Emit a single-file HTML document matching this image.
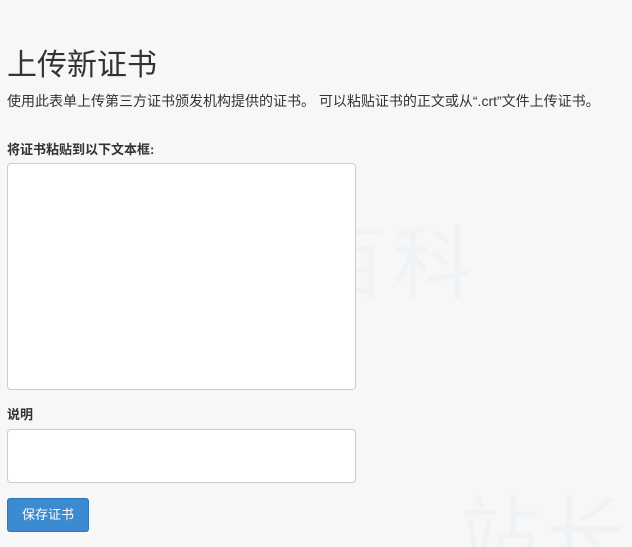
<!DOCTYPE html>
<html><head><meta charset="utf-8"><style>
html,body{margin:0;padding:0;width:632px;height:547px;background:#f7f7f7;overflow:hidden;font-family:"Liberation Sans","Noto Sans CJK SC",sans-serif;color:#333;position:relative}
h1{position:absolute;left:7px;top:46px;margin:0;font-weight:normal;font-size:30px;line-height:40px;color:#333}
.p{position:absolute;left:7px;top:91px;font-size:14px;line-height:20px;white-space:nowrap}
.l{position:absolute;left:7px;font-size:13px;font-weight:bold;line-height:18px}
.ta{position:absolute;left:7px;width:349px;background:#fff;border:1px solid #ccc;border-radius:4px;box-sizing:border-box}
.btn{position:absolute;left:7px;top:498px;width:82px;height:34px;background:#3c8bd0;border:1px solid #2f79b9;border-radius:3px;box-sizing:border-box;color:#fff;font-size:13px;text-align:center;line-height:32px}
.wm{position:absolute;font-size:80px;line-height:90px;color:rgba(200,220,235,0.15);letter-spacing:6px;white-space:nowrap}
</style></head><body>
<div class="wm" style="left:135px;top:220px">站长百科</div>
<div class="wm" style="left:460px;top:490px;height:57px;overflow:hidden">站长</div>
<h1>上传新证书</h1>
<div class="p">使用此表单上传第三方证书颁发机构提供的证书。 可以粘贴证书的正文或从“.crt”文件上传证书。</div>
<div class="l" style="top:141px">将证书粘贴到以下文本框:</div>
<div class="ta" style="top:163px;height:227px"></div>
<div class="l" style="top:406px">说明</div>
<div class="ta" style="top:429px;height:54px"></div>
<div class="btn">保存证书</div>
</body></html>
